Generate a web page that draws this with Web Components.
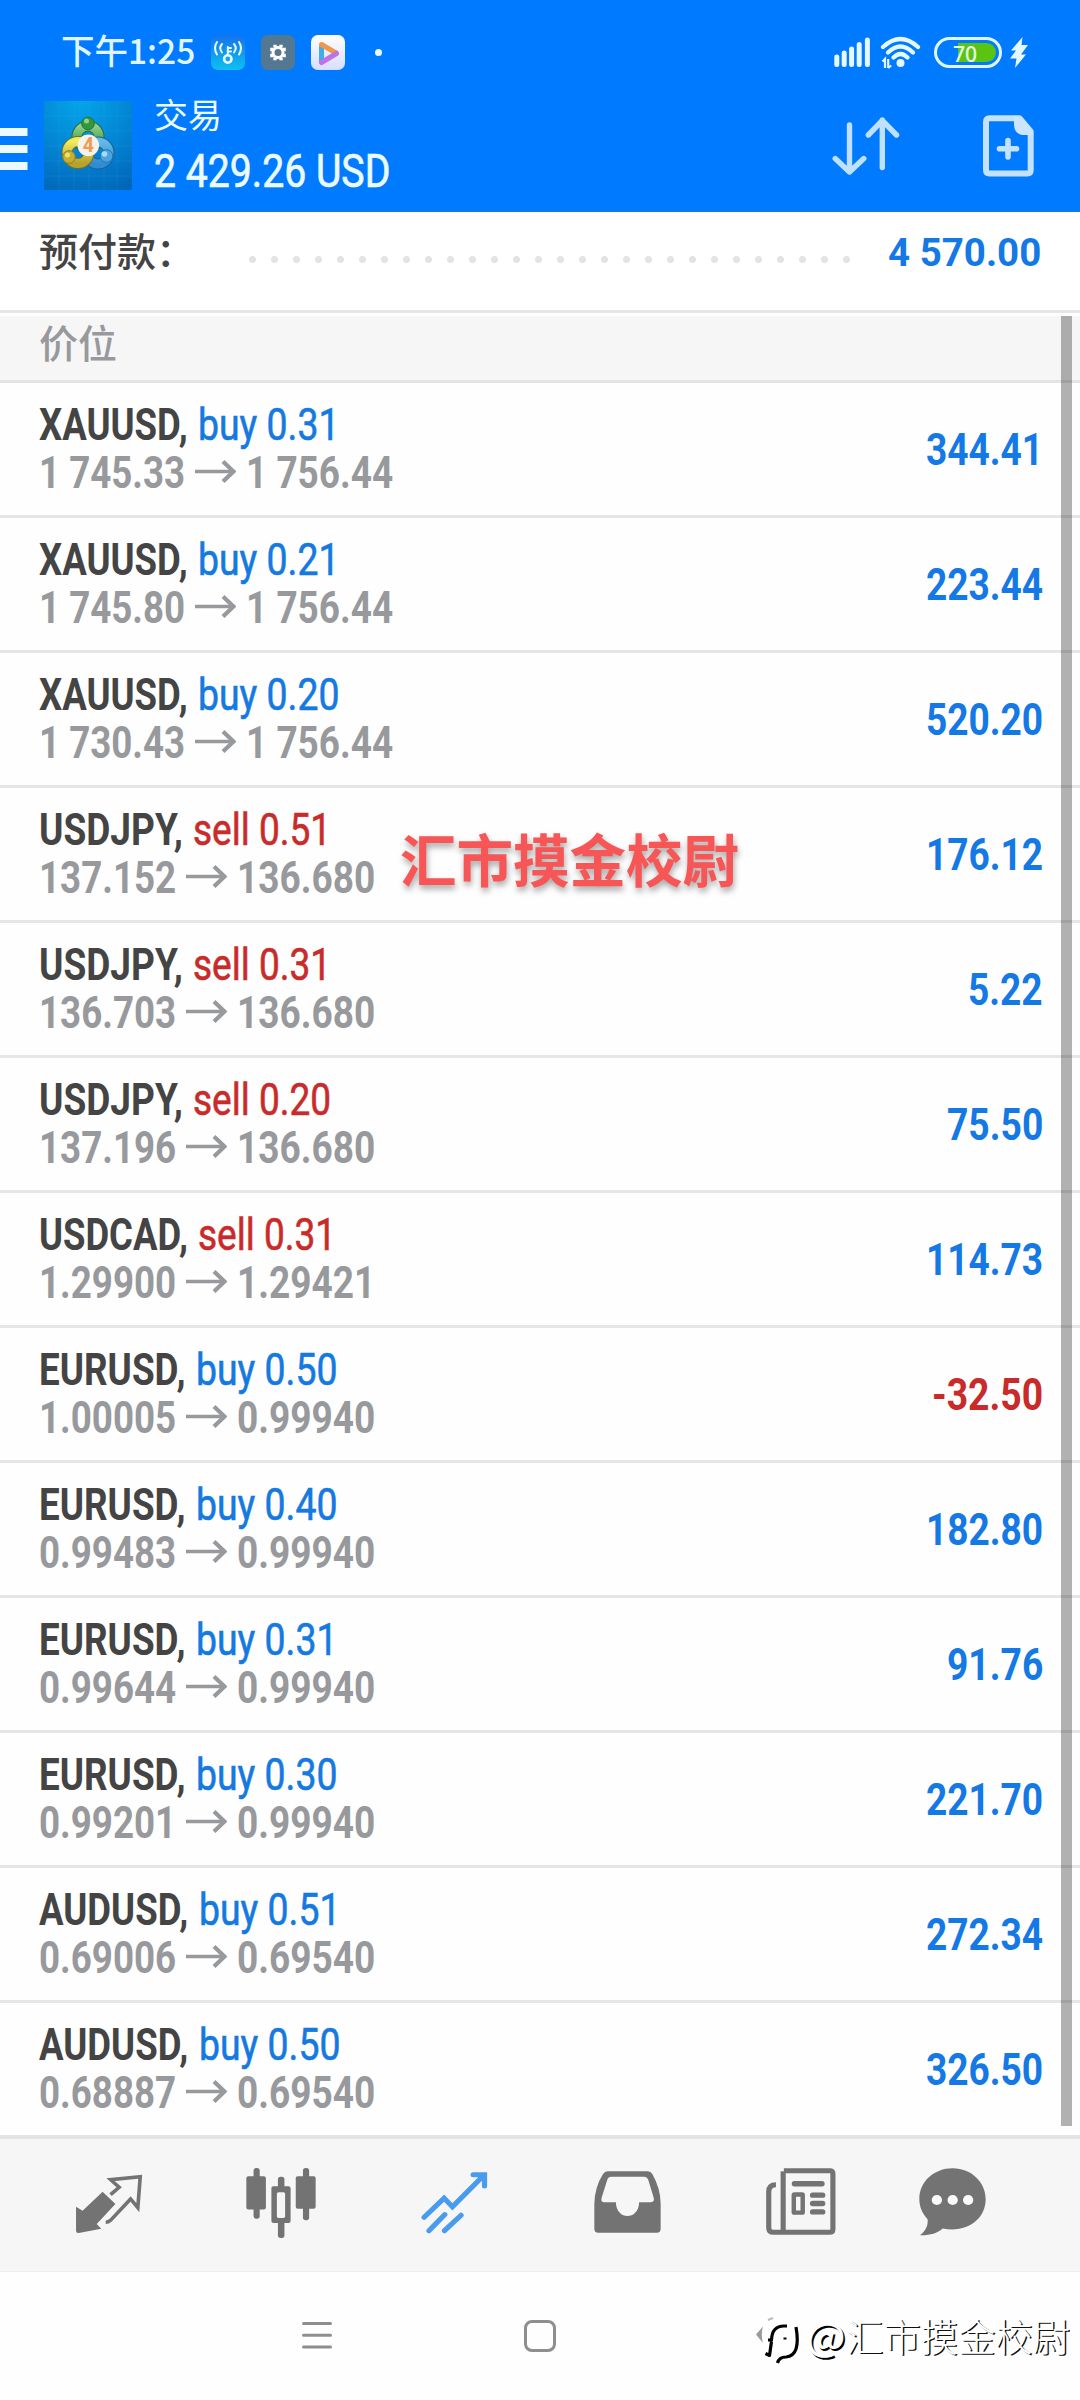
<!DOCTYPE html>
<html lang="zh-CN">
<head>
<meta charset="utf-8">
<title>交易</title>
<style>
html,body{margin:0;padding:0;background:#fefefe}
body{width:1080px;height:2400px;overflow:hidden;font-family:Roboto,"Noto Sans CJK SC",sans-serif;color:#444}
</style>
</head>
<body>
<trade-app></trade-app>
<script>
const define = (name, css, html, extra) => customElements.define(name, class extends HTMLElement {
  connectedCallback() {
    if (this.shadowRoot) return;
    const root = this.attachShadow({ mode: 'open' });
    root.innerHTML = `<style>*{box-sizing:border-box}${css}</style>${typeof html === 'function' ? html(this) : html}`;
    if (extra) extra(this, root);
  }
});

/* Condensed text: squeezes its content to the width given in "w". */
define('fit-text', ':host{display:block;white-space:nowrap;flex:none}span{display:inline-block;transform-origin:0 50%}', '<span><slot></slot></span>', (el, root) => {
  const w = +el.getAttribute('w');
  const s = root.querySelector('span');
  el.style.width = w + 'px';
  s.style.transform = `scaleX(${w / s.offsetWidth})`;
});

const ICONS = {
key:`<svg width="34" height="35" viewBox="0 0 34 35"><defs><linearGradient id="a" x2="0" y2="1"><stop stop-color="#1672ec"/><stop offset="1" stop-color="#0fc0f0"/></linearGradient></defs><rect width="34" height="35" rx="7" fill="url(#a)"/><g fill="none" stroke="#e8fbff" stroke-width="2" stroke-linecap="round"><path d="M6 7q-4 6 0 12.500M11 9q-3.500 4 0 8.500M28 7q4 6 0 12.500M23 9q3.500 4 0 8.500"/><circle cx="16.800" cy="24" r="3.700" stroke-width="2.600"/><path d="M16.800 20v-8M17 13h3M17 16.500h3"/></g></svg>`,
gear:`<svg width="34" height="35" viewBox="0 0 34 35"><rect width="34" height="35" rx="7" fill="#557892"/><g transform="translate(17 17.500)"><circle r="5" fill="none" stroke="#fff" stroke-width="3"/><g stroke="#fff" stroke-width="3.400"><path d="M-3-7.800V-5M3-7.800V-5M-3 7.800V5M3 7.800V5M-7.800-3H-5M-7.800 3H-5M7.800-3H5M7.800 3H5"/></g></g></svg>`,
play:`<svg width="34" height="35" viewBox="0 0 34 35"><defs><linearGradient id="b" x2="0" y2="1"><stop stop-color="#fff"/><stop offset="1" stop-color="#d7ddff"/></linearGradient></defs><rect width="34" height="35" rx="7" fill="url(#b)"/><g fill="none" stroke-width="5" stroke-linejoin="round" stroke-linecap="round"><path d="M10.500 11v16" stroke="#3eaee8" stroke-linecap="butt"/><path d="M10.500 9.500 25 18" stroke="#ee984a"/><path d="M25.500 18.500 10.500 27.500" stroke="#bd72e6"/></g></svg>`,
signal:`<svg width="37" height="31" viewBox="0 0 37 31" stroke="#e6f8ff" stroke-width="5" stroke-linecap="round"><path d="M2.800 20v7.500M10.200 16v11.500M17.600 12v15.500M25.200 7.500v20M33.400 3v24.500"/></svg>`,
wifi:`<svg width="41" height="33" viewBox="0 0 41 33"><g fill="none" stroke="#e6f8ff" stroke-width="4.200" stroke-linecap="round"><path d="M3 11Q20.500-5 38 11M8 16.500Q20.500 4.500 33 16.500M13.500 21.500Q20.500 14.500 27.500 21.500"/></g><circle cx="20.500" cy="27" r="4" fill="#e6f8ff"/><path d="M2.500 25.500 5 23v9M8.200 23v9M8.200 32l3-2.500" fill="none" stroke="#e6f8ff" stroke-width="2.200"/></svg>`,
bolt:`<svg width="18" height="31" viewBox="0 0 18 31"><path d="M12.500 0 1 13.500H6L0 21.500H6.500L5 31 16 17.500H11L18 8H11.500Z" fill="#e6f8ff"/></svg>`,
menu:`<svg width="28" height="42" viewBox="0 0 28 42" fill="#ecfaff"><path d="M0 0h27.500v8H0zM0 17h27.500v8H0zM0 34h27.500v8H0z"/></svg>`,
logo:`<svg width="88" height="89" viewBox="0 0 88 89"><defs><radialGradient id="c" cx=".42" cy="0" r="1.100"><stop stop-color="#04a5ea"/><stop offset=".55" stop-color="#0383d2"/><stop offset="1" stop-color="#0166b8"/></radialGradient><linearGradient id="g" x2="0" y2="1"><stop stop-color="#8fd088"/><stop offset="1" stop-color="#2d8c35"/></linearGradient><linearGradient id="y" x2="0" y2="1"><stop stop-color="#f1ea5d"/><stop offset="1" stop-color="#b5a12c"/></linearGradient><linearGradient id="u" x2="0" y2="1"><stop stop-color="#63b9e8"/><stop offset="1" stop-color="#2f8cd0"/></linearGradient></defs><rect width="88" height="89" fill="url(#c)"/><path d="M0 30h88M0 45h88M0 60h88M0 75h88M0 15h88M15 0v89M30 0v89M45 0v89M60 0v89M73 0v89" stroke="#3bb4ed" stroke-opacity=".16"/>
<g fill="none" stroke-width="9"><circle cx="44" cy="36" r="11" stroke="#286b3b" stroke-width="11"/><circle cx="44" cy="36" r="11" stroke="url(#g)"/><circle cx="54" cy="52" r="11" stroke="#1f5f9a" stroke-width="11"/><circle cx="54" cy="52" r="11" stroke="url(#u)"/><circle cx="34" cy="51.500" r="11" stroke="#68722d" stroke-width="11"/><circle cx="34" cy="51.500" r="11" stroke="url(#y)"/></g>
<circle cx="44" cy="22.500" r="6.300" fill="#35973c" stroke="#247336"/><circle cx="42.500" cy="20" r="2.500" fill="#8fd08a"/><circle cx="25" cy="56" r="6.300" fill="#c5ae30" stroke="#8a7b25"/><circle cx="23.500" cy="54" r="2.500" fill="#efe070"/><circle cx="62.500" cy="55" r="6.300" fill="#4aa5df" stroke="#2276b5"/><circle cx="60.500" cy="53" r="2.800" fill="#a8d9f5"/><circle cx="44.300" cy="44.300" r="10.800" fill="#f5f1ec"/><text x="44.300" y="51.300" font-family="Roboto,sans-serif" font-size="19.500" font-weight="700" text-anchor="middle" fill="#ed9c50">4</text></svg>`,
sort:`<svg width="68" height="60" viewBox="0 0 68 60" fill="none" stroke="#bfe0ff" stroke-width="5.400" stroke-linecap="round" stroke-linejoin="round"><path d="M17.500 9v47M3.200 42.500 17.500 56 31.800 42.500M50.300 51.500V4M36.300 19 50.300 4.500 64.500 19"/></svg>`,
doc:`<svg width="51" height="62" viewBox="0 0 51 62" fill="none" stroke="#c4e2ff"><path d="M6.500 3.200h30L47.700 16.500V55q0 3.500-3.500 3.500H6.500Q3 58.500 3 55V7q0-3.800 3.500-3.800Z" stroke-width="6" stroke-linejoin="round"/><path d="M31 2h7L50 16v4h-8q-11 0-11-11Z" fill="#cce5ff" stroke="none"/><path d="M25 25.500v16.500M16.500 33.700h17" stroke-width="5.600" stroke-linecap="round"/></svg>`,
quotes:`<svg width="68" height="60" viewBox="217 188 197 180" preserveAspectRatio="none"><path d="M297 241 334 278 280 338 293 352 228 365Q220 366 220 358V286L239 298Z" fill="#737373"/><path d="M320 250 345 228 320 205 406 196 399 289 378 263 320 327Q314 333 306 333" fill="none" stroke="#737373" stroke-width="10.500"/></svg>`,
candles:`<svg width="70" height="70" viewBox="714 175 204 206" preserveAspectRatio="none"><g fill="#737373"><rect x="736" y="175" width="18" height="149" rx="8"/><rect x="715" y="199" width="57" height="98" rx="6"/><rect x="880" y="175" width="18" height="154" rx="8"/><rect x="859" y="199" width="58" height="96" rx="6"/><rect x="807" y="201" width="19" height="180" rx="8"/><rect x="788" y="229" width="56" height="108" rx="6"/></g><rect x="804" y="246" width="24" height="76" rx="5" fill="#f6f6f6"/></svg>`,
trade:`<svg width="67" height="63" viewBox="1222 180 194 188" preserveAspectRatio="none"><path d="M1231 318 1289 261 1313 287 1404 193M1373 191H1406V225M1245 358 1291 310M1290 358 1338 312" fill="none" stroke="#499bee" stroke-width="15" stroke-linecap="round"/></svg>`,
inbox:`<svg width="67" height="62" viewBox="158 182 193 185" preserveAspectRatio="none"><path fill-rule="evenodd" fill="#737373" d="M197 183H313Q321 183 326 191 350 235 350 280V355Q350 366 339 366H170Q159 366 159 355V280Q160 230 184 191 189 183 197 183ZM207 199Q200 199 197 206L180 262Q177 275 186 275H221C222 330 287 330 288 275H322Q333 275 330 262L314 207Q311 199 303 199Z"/></svg>`,
news:`<svg width="70" height="67" viewBox="656 174 204 200" preserveAspectRatio="none"><g fill="none" stroke="#737373"><path d="M708 182H842Q851 182 851 191V356Q851 366 841 366H678Q664 366 664 352V245Q664 224 685 224" stroke-width="15"/><path d="M706 184V364" stroke-width="15"/><path d="M739 221H819M792 255H821M792 280H821M792 305H821" stroke-width="16" stroke-linecap="round"/><rect x="737" y="253" width="26" height="54" stroke-width="13" rx="2"/></g></svg>`,
chat:`<svg width="67" height="68" viewBox="1102 173 195 202" preserveAspectRatio="none"><path d="M1200 174C1255 174 1296 216 1296 266 1296 323 1245 367 1171 353 1154 368 1132 374 1105 373 1122 359 1129 343 1127 325 1112 309 1103 289 1103 266 1103 214 1145 174 1200 174Z" fill="#737373"/><g fill="#fafafa"><circle cx="1154" cy="268" r="15"/><circle cx="1200" cy="268" r="15"/><circle cx="1245" cy="268" r="15"/></g></svg>`,
arrow:`<svg width="41" height="24" viewBox="0 0 41 24" fill="none" stroke="#97999c" stroke-width="3.600"><path d="M0 12.500H38"/><path d="M28 2.500 38.500 12.500 28 22.500" stroke-width="4.200"/></svg>`,
recents:`<svg width="30" height="30" viewBox="0 0 30 30" stroke="#8e8e8e" stroke-width="3" stroke-linecap="round"><path d="M1.500 3.500h27M1.500 15.300h27M1.500 27h27"/></svg>`,
home:`<svg width="32" height="32" viewBox="0 0 32 32"><rect x="1.500" y="1.500" width="29" height="29" rx="6.500" fill="none" stroke="#8e8e8e" stroke-width="3"/></svg>`,
brand:`<svg width="52" height="56" viewBox="0 0 52 56"><path d="M9 9.500 2 17.500 9 26Q6.500 17 9 9.500Z" fill="#999"/><path d="M14 3l5-2" stroke="#bbb" stroke-width="2"/><g fill="none" stroke="#000" stroke-width="3.200"><path d="M14 23h3.500Q18 9 30 9h3M17.500 24.500 15.500 38.500l-4-2M42 10q5 29-10 30-7 0-8.500 6" stroke-linejoin="round"/></g><path d="M29.500 20.500h3v2h-3z"/></svg>`
};
define('ui-icon', ':host{display:block;flex:none}svg{display:block}', el => ICONS[el.getAttribute('name')]);

define('battery-pill', ':host{display:flex;width:68px;height:31px;border:3px solid #dff5ff;border-radius:16px;padding:3px;position:relative;justify-content:flex-end}i{width:38px;border-radius:0 10px 10px 0;background:#5ac413}span{position:absolute;left:16px;top:2px;font:500 22px/22px "Noto Sans",sans-serif;color:#e9fbe8}', el => `<i></i><span><fit-text w="24">${el.getAttribute('level')}</fit-text></span>`);

define('status-bar', ':host{display:flex;height:104px;align-items:center;padding:0 52px 0 61px;color:#dff5ff}.t{display:flex;font:500 34px/40px "Noto Sans CJK SC",sans-serif;margin-right:16px;margin-top:-4px}.apps{display:flex;gap:16px}.dot{width:7px;height:7px;border-radius:50%;background:#e8faff;margin-left:30px}.r{margin-left:auto;display:flex;align-items:center}',
`<div class="t"><fit-text w="134"><slot></slot></fit-text></div><div class="apps"><ui-icon name="key"></ui-icon><ui-icon name="gear"></ui-icon><ui-icon name="play"></ui-icon></div><div class="dot"></div>
<div class="r"><ui-icon name="signal"></ui-icon><ui-icon name="wifi" style="margin-left:9px"></ui-icon><battery-pill level="70" style="margin-left:13px"></battery-pill><ui-icon name="bolt" style="margin-left:8px"></ui-icon></div>`);

define('app-bar', ':host{display:flex;height:108px;align-items:flex-start;padding-right:46px;color:#ebfaff}.m{margin-top:24px}.l{margin:-3px 0 0 16px}.x{margin:-10px 0 0 22px}h1{margin:0;font:400 34px/40px "Noto Sans CJK SC",sans-serif}b{display:block;font:400 47px/56px Roboto,sans-serif;margin-top:9px;-webkit-text-stroke:.7px #ebfaff}.s{margin:12px 0 0 auto}.d{margin:11px 0 0 83px}',
`<ui-icon class="m" name="menu"></ui-icon><ui-icon class="l" name="logo"></ui-icon><div class="x"><h1>交易</h1><b><fit-text w="236">2 429.26 USD</fit-text></b></div><ui-icon class="s" name="sort"></ui-icon><ui-icon class="d" name="doc"></ui-icon>`);

define('margin-line', ':host{display:flex;height:101px;padding:0 39px 0 39px;background:#fff;border-bottom:3px solid #e6e6e6;margin-bottom:3px;align-items:flex-start}.k{font:500 39px/58px "Noto Sans CJK SC",sans-serif;width:210px;padding-top:8px;height:70px;white-space:nowrap}.dots{width:616px;height:7px;margin-top:44px;background:radial-gradient(circle at 3.5px 3.5px,#e3e3e3 3.1px,transparent 3.9px) 0 0/22px 7px}.v{font:700 39.500px/48px Roboto,sans-serif;color:#1479e4;margin:17px 0 0 auto}',
`<div class="k">预付款：</div><div class="dots"></div><div class="v"><fit-text w="153">4 570.00</fit-text></div>`);

define('section-head', ':host{display:block;height:67px;background:#f6f6f6;border-bottom:3px solid #e4e4e4;padding:0 39px;font:500 39px/50px "Noto Sans CJK SC",sans-serif;color:#97999c}', '<slot></slot>');

define('position-row', `:host{display:flex;height:135px;border-bottom:3px solid #e6e6e6;padding:18px 37px 0 39px;font-size:44px;line-height:48px;background:#fefefe}
.a{display:flex}.b{display:flex;align-items:center;gap:10px;color:#97999c;font-weight:700}.b ui-icon{margin-top:-4px}.s{font-weight:700;color:#444;margin-right:10px}.buy{color:#1479e0;-webkit-text-stroke:.6px #1479e0}.sell{color:#c92a2a;-webkit-text-stroke:.6px #c92a2a}.v{margin:25px 0 0 auto;font-weight:700;font-size:45px;color:#1479e4}.neg{color:#c92a2a}`,
el => { const g = n => el.getAttribute(n), long = g('from').length > 7, sym = g('symbol'), side = g('side'), p = g('profit');
  const sw = { XAUUSD:148.5, USDJPY:144, USDCAD:149, EURUSD:146.5, AUDUSD:149.5 }[sym];
  const vw = { 4:75, 5:96, 6:p[0] === '-' ? 111 : 117 }[p.length];
  return `<div><div class="a"><fit-text class="s" w="${sw}">${sym},</fit-text><fit-text class="${side}" w="${side === 'buy' ? 141 : 138}">${side} ${g('lot')}</fit-text></div>
<div class="b"><fit-text w="${long ? 146 : 137}">${g('from')}</fit-text><ui-icon name="arrow"></ui-icon><fit-text w="${long ? 147 : 138}">${g('to')}</fit-text></div></div><fit-text class="v ${p[0] === '-' ? 'neg' : ''}" w="${vw}">${p}</fit-text>`; });

define('tab-bar', ':host{display:flex;height:137px;background:#f6f6f6;border-top:4px solid #e4e4e4;align-items:flex-start;border-bottom:1px solid #eee;padding-left:75px}',
[['quotes',0,35],['candles',103,29],['trade',105,32],['inbox',106,32],['news',105,29],['chat',83,29]].map(([n,l,t]) => `<ui-icon name="${n}" style="margin:${t}px 0 0 ${l}px"></ui-icon>`).join(''));

define('system-nav', ':host{display:flex;height:128px;padding:48px 10px 0 302px;align-items:flex-start;background:#fefefe}.h{margin:0 0 0 192px}.w{margin:-3px 0 0 auto;display:flex;align-items:flex-start}.w div{font:300 37.500px/44px "Noto Sans CJK SC",sans-serif;color:#fff;text-shadow:1.500px 1px 0 #111;display:flex;gap:1px;margin-top:-4px}.at{font-weight:500;text-shadow:1.500px 1.500px 0 #000}',
`<ui-icon name="recents"></ui-icon><ui-icon class="h" name="home"></ui-icon><div class="w"><ui-icon name="brand"></ui-icon><div><fit-text class="at" w="39">@</fit-text><fit-text w="224"><slot></slot></fit-text></div></div>`);

const rows = `XAUUSD|buy|0.31|1 745.33|1 756.44|344.41
XAUUSD|buy|0.21|1 745.80|1 756.44|223.44
XAUUSD|buy|0.20|1 730.43|1 756.44|520.20
USDJPY|sell|0.51|137.152|136.680|176.12
USDJPY|sell|0.31|136.703|136.680|5.22
USDJPY|sell|0.20|137.196|136.680|75.50
USDCAD|sell|0.31|1.29900|1.29421|114.73
EURUSD|buy|0.50|1.00005|0.99940|-32.50
EURUSD|buy|0.40|0.99483|0.99940|182.80
EURUSD|buy|0.31|0.99644|0.99940|91.76
EURUSD|buy|0.30|0.99201|0.99940|221.70
AUDUSD|buy|0.51|0.69006|0.69540|272.34
AUDUSD|buy|0.50|0.68887|0.69540|326.50`.split('\n').map(r => r.split('|'));

define('trade-app', `:host{display:flex;flex-direction:column;width:1080px;height:2400px}header{background:#007bff;height:212px;border-bottom:1px solid #2277d8}main{height:1819px;position:relative}
position-row:last-child{border-bottom:0;height:132px}.bar{position:absolute;left:1061px;top:0;width:11px;height:1810px;background:rgba(0,0,0,.3)}
.mark{position:absolute;left:400px;top:506px;font:700 56.500px/70px "Noto Sans CJK SC",sans-serif;color:#f85656;text-shadow:1px 4px 6px rgba(0,0,0,.35)}`,
`<header><status-bar>下午1:25</status-bar><app-bar></app-bar></header><margin-line></margin-line>
<main><section-head>价位</section-head><div>${rows.map(([s,d,l,f,t,p]) => `<position-row symbol="${s}" side="${d}" lot="${l}" from="${f}" to="${t}" profit="${p}"></position-row>`).join('')}</div><div class="bar"></div><div class="mark"><fit-text w="339">汇市摸金校尉</fit-text></div></main>
<tab-bar></tab-bar><system-nav>汇市摸金校尉</system-nav>`);
</script>
</body>
</html>
